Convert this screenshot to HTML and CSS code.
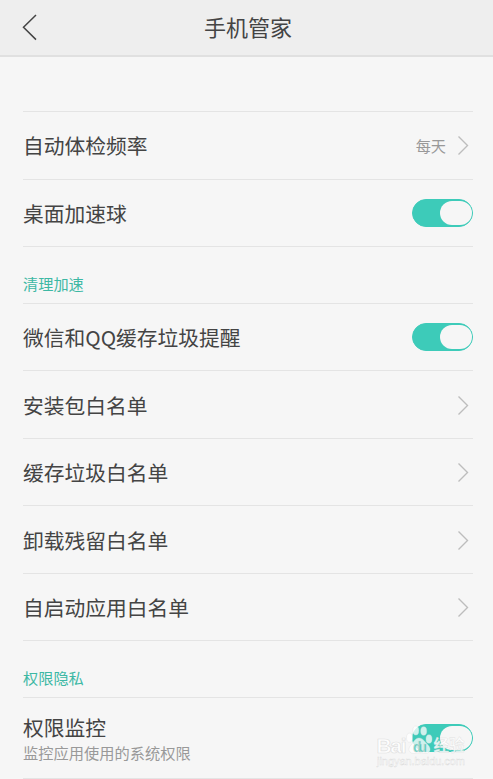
FILE: index.html
```html
<!DOCTYPE html>
<html lang="zh-CN">
<head>
    <meta charset="UTF-8">
    <meta name="viewport" content="width=device-width, initial-scale=1.0">
    <title>手机管家</title>
    <link rel="stylesheet" href="styles.css">
</head>
<body>
    <header>
        <a href="#" class="back">
            <svg width="16" height="28" viewBox="0 0 16 28"><path d="M14 2 L1.5 14.3 L14 26.6"/></svg>
        </a>
        <h1>手机管家</h1>
    </header>

    <main>
        <ul class="list">
            <li class="row">
                <span class="label">自动体检频率</span>
                <span class="value">每天</span>
                <svg class="arrow" width="12" height="20" viewBox="0 0 12 20"><path d="M1.500 1.500 L10.500 10.500 L1.500 19.500"/></svg>
            </li>
            <li class="row">
                <span class="label">桌面加速球</span>
                <span class="toggle"></span>
            </li>
        </ul>

        <h2>清理加速</h2>
        <ul class="list">
            <li class="row">
                <span class="label">微信和QQ缓存垃圾提醒</span>
                <span class="toggle"></span>
            </li>
            <li class="row">
                <span class="label">安装包白名单</span>
                <svg class="arrow" width="12" height="20" viewBox="0 0 12 20"><path d="M1.500 1.500 L10.500 10.500 L1.500 19.500"/></svg>
            </li>
            <li class="row">
                <span class="label">缓存垃圾白名单</span>
                <svg class="arrow" width="12" height="20" viewBox="0 0 12 20"><path d="M1.500 1.500 L10.500 10.500 L1.500 19.500"/></svg>
            </li>
            <li class="row">
                <span class="label">卸载残留白名单</span>
                <svg class="arrow" width="12" height="20" viewBox="0 0 12 20"><path d="M1.500 1.500 L10.500 10.500 L1.500 19.500"/></svg>
            </li>
            <li class="row">
                <span class="label">自启动应用白名单</span>
                <svg class="arrow" width="12" height="20" viewBox="0 0 12 20"><path d="M1.500 1.500 L10.500 10.500 L1.500 19.500"/></svg>
            </li>
        </ul>

        <h2>权限隐私</h2>
        <ul class="list">
            <li class="row tall">
                <div class="label">
                    权限监控
                    <p class="desc">监控应用使用的系统权限</p>
                </div>
                <span class="toggle"></span>
            </li>
        </ul>
    </main>

    <!-- watermark -->
    <svg class="watermark" width="96" height="50" viewBox="0 0 96 50">
        <g class="paw">
            <ellipse cx="37.500" cy="17.700" rx="3" ry="4.500"/>
            <ellipse cx="43.800" cy="10.500" rx="3" ry="4.500"/>
            <ellipse cx="51.700" cy="11" rx="3" ry="4.300"/>
            <ellipse cx="57" cy="19" rx="3" ry="4.300"/>
            <path d="M47 18 C51 18 53 22 56 25 C60 29 58 34 52 33.500 C49 32.800 46 32.800 43 33.500 C37 34 35 29 39 25 C42 22 43 18 47 18 Z"/>
        </g>
        <text class="brand" x="4.500" y="32.500" textLength="30">Bai</text>
        <text class="brand small" x="41" y="31.500" textLength="14">du</text>
        <text class="brand cn" x="61.500" y="31" textLength="31">经验</text>
        <text class="site" x="5" y="44.500" textLength="88">jingyan.baidu.com</text>
    </svg>
</body>
</html>
```

FILE: styles.css
```css
* {
    box-sizing: border-box;
}
body {
    font-family: "Noto Sans CJK SC", sans-serif;
    margin: 0;
    position: relative;
    height: 779px;
    overflow: hidden;
    background-color: #f6f6f6;
    color: #444;
}
header {
    display: grid;
    grid-template-columns: 60px 1fr 60px;
    align-items: center;
    height: 57px;
    background-color: #eeeeee;
    border-bottom: 2px solid #e0e0e0;
}
.back {
    display: flex;
    padding-left: 22px;
    padding-bottom: 1px;
}
svg path {
    fill: none;
}
.back path {
    stroke: #444;
    stroke-width: 1.5;
}
h1 {
    margin: 0;
    padding-left: 3px;
    text-align: center;
    font-size: 22px;
    font-weight: 400;
    line-height: 53px;
    padding-bottom: 2px;
}
main {
    padding: 54px 20px 0 23px;
}
.list {
    list-style: none;
    margin: 0;
    padding: 0;
    border-top: 1px solid #e4e4e4;
}
.row {
    display: flex;
    align-items: center;
    height: 67.5px;
    border-bottom: 1px solid #e4e4e4;
}
.label {
    flex: 1;
    font-size: 20.75px;
    line-height: 30px;
}
.value {
    margin-right: 11px;
    font-size: 15.2px;
    color: #999;
}
.arrow {
    margin-right: 4px;
}
.arrow path {
    stroke: #bdbdbd;
    stroke-width: 1.4;
}
.toggle {
    width: 61px;
    height: 28px;
    border-radius: 14px;
    border: 1px solid #3dcbb9;
    background-color: #3dcbb9;
}
.toggle::after {
    content: "";
    display: block;
    width: 32px;
    height: 24px;
    margin: 1px 0 0 auto;
    border-radius: 12px;
    background-color: #f6f6f6;
}
h2 {
    margin: 0;
    padding-top: 18px;
    height: 55.8px;
    font-size: 15.2px;
    font-weight: 400;
    line-height: 36px;
    color: #3db8a4;
}
.tall {
    height: 81px;
}
.tall .label {
    padding-bottom: 2px;
}
.desc {
    margin: 0;
    font-size: 15.25px;
    line-height: 20px;
    color: #999;
}
.watermark {
    position: absolute;
    left: 372px;
    top: 720px;
}
.paw ellipse,
.paw path {
    fill: #fff;
    fill-opacity: 0.75;
    stroke: #ddd;
    stroke-width: 0.6;
    stroke-opacity: 0.6;
}
.brand {
    font-family: "Liberation Sans", sans-serif;
    font-size: 21px;
    font-weight: 700;
    fill: #fff;
    fill-opacity: 0.85;
    stroke: #d4d4d4;
    stroke-width: 0.7;
    stroke-opacity: 0.7;
}
.small {
    font-size: 14px;
    fill: #3dcbb9;
}
.cn {
    font-family: "Noto Sans CJK SC", sans-serif;
    font-size: 15.5px;
    stroke-width: 0.4;
}
.site {
    font-family: "Liberation Sans", sans-serif;
    font-size: 11px;
    fill: #fff;
    stroke: #ccc;
    stroke-width: 0.4;
    stroke-opacity: 0.7;
}
```
